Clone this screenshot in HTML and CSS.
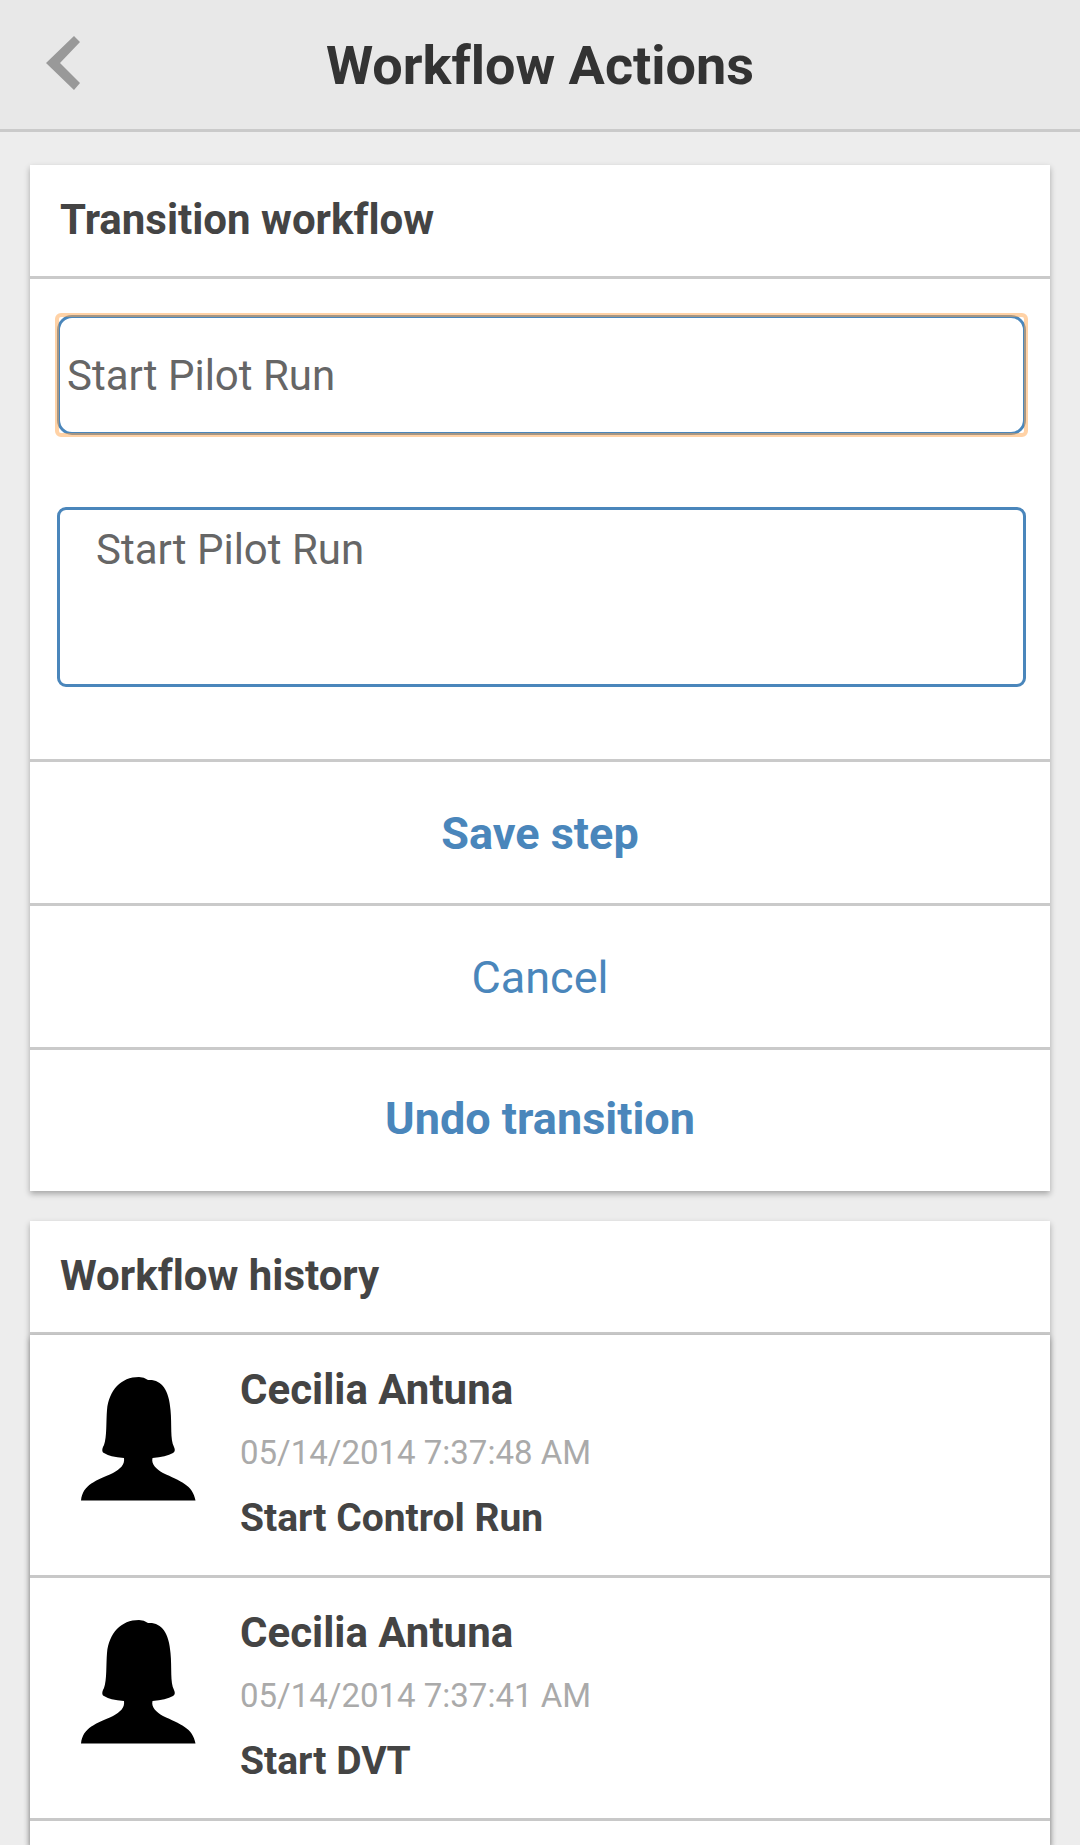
FILE: index.html
```html
<!DOCTYPE html>
<html lang="en">
<head>
<meta charset="utf-8">
<meta name="viewport" content="width=device-width, initial-scale=1">
<title>Workflow Actions</title>
<link rel="stylesheet" href="styles.css">
</head>
<body>
<svg class="sprite" aria-hidden="true">
  <symbol id="avatar" viewBox="0 0 144 144">
    <path d="M79 12 C61 12 49 25 47 45 C46 57 47 72 44 80 Q41 85 43 87.500 Q50 92 64 93 C65 100 60 104 53 108 C36 116 23 119 21 135.500 L135.500 135.500 C133 120 120 116 103 108 C96 104 91 99 92.500 93 Q106 92 113 88 Q116 86 114 82 C110 74 112 60 110.500 45 C109 24 101 14 88 15 Q84 12 79 12 Z"/>
  </symbol>
</svg>

<header class="topbar">
  <button class="back" type="button" aria-label="Back">
    <svg class="back-icon" viewBox="0 0 36 56" aria-hidden="true"><path d="M28 1 34 7 14 28 34 48 28 55 0 28Z"/></svg>
  </button>
  <h1 class="page-title">Workflow Actions</h1>
</header>

<main class="content">
  <section class="card">
    <h2 class="card-title">Transition workflow</h2>
    <form>
      <div class="fields">
        <div class="select-wrap">
          <select class="field select" aria-label="Transition">
            <option>Start Pilot Run</option>
          </select>
        </div>
        <textarea class="field comment" aria-label="Comment">Start Pilot Run</textarea>
      </div>
      <button class="action action-strong" type="button">Save step</button>
      <button class="action" type="button">Cancel</button>
      <button class="action action-strong action-last" type="button">Undo transition</button>
    </form>
  </section>

  <section class="card card-fill">
    <h2 class="card-title">Workflow history</h2>
    <ul class="history">
      <li class="entry">
        <svg class="avatar" aria-hidden="true"><use href="#avatar"/></svg>
        <div class="details">
          <h3 class="name">Cecilia Antuna</h3>
          <time class="date">05/14/2014 7:37:48 AM</time>
          <p class="step">Start Control Run</p>
        </div>
      </li>
      <li class="entry">
        <svg class="avatar" aria-hidden="true"><use href="#avatar"/></svg>
        <div class="details">
          <h3 class="name">Cecilia Antuna</h3>
          <time class="date">05/14/2014 7:37:41 AM</time>
          <p class="step">Start DVT</p>
        </div>
      </li>
    </ul>
  </section>
</main>
</body>
</html>
```

FILE: styles.css
```css
* {
  box-sizing: border-box;
}

body {
  margin: 0;
  min-height: 100vh;
  display: flex;
  flex-direction: column;
  background: #ededed;
  color: #444;
  font-family: Roboto, "Liberation Sans", sans-serif;
  font-size: 42px;
  font-variant-ligatures: none;
  line-height: 48px;
}

h1, h2, h3, p, ul {
  margin: 0;
  padding: 0;
}

button, select, textarea {
  font: inherit;
}

.sprite {
  display: none;
}

.topbar {
  display: grid;
  grid-template-columns: 1fr auto 1fr;
  align-items: start;
  padding: 33px 0 30px;
  background: #e8e8e8;
  border-bottom: 3px solid #cacaca;
}

.back {
  justify-self: start;
  display: flex;
  padding: 2px 46px;
  border: 0;
  background: none;
}

.back-icon {
  width: 36px;
  height: 56px;
  fill: #999;
}

.page-title {
  color: #333;
  font-size: 54px;
  line-height: 66px;
  font-weight: 700;
}

.content {
  flex: 1;
  display: flex;
  flex-direction: column;
  gap: 30px;
  padding: 33px 30px 0;
}

.card {
  background: #fff;
  box-shadow: 0 3px 6px rgba(0, 0, 0, 0.3);
}

.card-fill {
  flex: 1;
  display: flex;
  flex-direction: column;
}

.card-title {
  padding: 31px 30px 32px;
  border-bottom: 3px solid #cacaca;
  font-size: 42px;
  font-weight: 700;
}

.fields {
  display: flex;
  flex-direction: column;
  gap: 72px;
  padding: 36px 24px 72px 27px;
}

.select-wrap {
  position: relative;
}

/* Focus ring, drawn half over the border of the select */
.select-wrap::after {
  content: "";
  position: absolute;
  inset: -2px;
  border: 4px solid rgba(255, 165, 77, 0.5);
  border-radius: 6px;
  pointer-events: none;
}

.field {
  display: block;
  width: 100%;
  border: 3px solid #4a86bb;
  background: #fff;
  color: #666;
}

.select {
  appearance: none;
  height: 120px;
  padding: 2px 7px 0;
  border-radius: 15px;
}

.comment {
  height: 180px;
  padding: 16px 36px;
  border-radius: 9px;
  resize: none;
}

.action {
  display: block;
  width: 100%;
  padding: 48px 30px 45px;
  border: 0;
  border-top: 3px solid #cacaca;
  background: none;
  color: #4a86bb;
  font-size: 45px;
  text-align: center;
}

.action-strong {
  font-weight: 700;
}

.action-last {
  padding: 45px 30px 48px;
}

.history {
  flex: 1;
  list-style: none;
  box-shadow: 0 3px 6px rgba(0, 0, 0, 0.3);
}

.entry {
  display: flex;
  gap: 36px;
  padding: 30px;
  border-bottom: 3px solid #c8c8c8;
}

.avatar {
  width: 144px;
  height: 144px;
}

.details {
  display: flex;
  flex-direction: column;
  gap: 15px;
  padding-top: 1px;
}

.name {
  font-size: 42px;
  font-weight: 700;
}

.date {
  color: #aaa;
  font-size: 33px;
}

.step {
  font-size: 39px;
  line-height: 53px;
  font-weight: 700;
}
```
